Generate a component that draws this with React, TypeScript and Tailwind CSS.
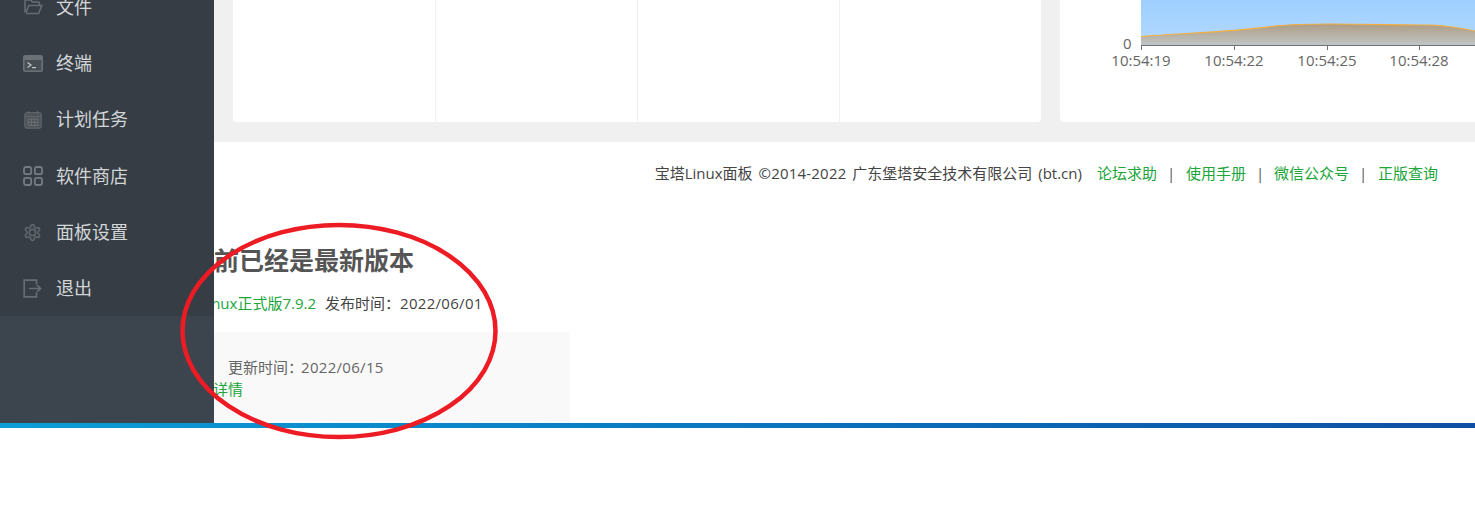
const menu = [
  { label: "文件", icon: <FolderIcon /> },
  { label: "终端", icon: <TerminalIcon /> },
  { label: "计划任务", icon: <CalendarIcon /> },
  { label: "软件商店", icon: <GridIcon /> },
  { label: "面板设置", icon: <GearIcon /> },
  { label: "退出", icon: <ExitIcon /> },
];

const font = "font-['Open_Sans','Noto_Sans_CJK_SC',sans-serif]";

function FolderIcon() {
  return (
    <svg width="20" height="20" viewBox="0 0 20 20" fill="none" stroke="#666c72" strokeWidth="1.6">
      <path d="M3 16.5 H15.5 L18.8 8.5 H5.8 L3 15.5 M2 15.5 V4 C2 3.4 2.4 3 3 3 H7.5 L9.5 5 H15.5 C16 5 16.4 5.4 16.4 6 V8.5" />
    </svg>
  );
}

function TerminalIcon() {
  return (
    <svg width="20" height="17" viewBox="0 0 20 17" fill="none">
      <rect x="0.8" y="0.8" width="18.4" height="15.4" rx="1.5" fill="#474e54" stroke="#6b7177" strokeWidth="1.6" />
      <rect x="1" y="1" width="18" height="4" fill="#6b7177" />
      <path d="M4.5 7.5 L8 10 L4.5 12.5" stroke="#c4c8cb" strokeWidth="1.2" />
      <path d="M9 12.6 H13" stroke="#c4c8cb" strokeWidth="1.2" />
    </svg>
  );
}

function CalendarIcon() {
  return (
    <svg width="18" height="18" viewBox="0 0 18 18" fill="none">
      <rect x="0.8" y="1.5" width="16.4" height="15.7" rx="2.5" fill="#4d5359" stroke="#5f656b" strokeWidth="1.2" />
      <path d="M4.5 0.2 V2.5 M13.5 0.2 V2.5" stroke="#666c72" strokeWidth="1.2" />
      <path d="M1 5.5 H17" stroke="#60666c" strokeWidth="1" />
      <path d="M4 8 H14 V14.5 H4 Z M4 11.2 H14 M7.3 8 V14.5 M10.7 8 V14.5" stroke="#71777c" strokeWidth="0.8" />
    </svg>
  );
}

function GridIcon() {
  return (
    <svg width="20" height="20" viewBox="0 0 20 20" fill="none" stroke="#757b80" strokeWidth="1.8">
      <rect x="1" y="1" width="7.2" height="7.2" rx="2" />
      <rect x="11.8" y="1" width="7.2" height="7.2" rx="2" />
      <rect x="1" y="11.8" width="7.2" height="7.2" rx="2" />
      <rect x="11.8" y="11.8" width="7.2" height="7.2" rx="2" />
    </svg>
  );
}

function GearIcon() {
  return (
    <svg width="19" height="19" viewBox="0 0 24 24" fill="none" stroke="#62686e" strokeWidth="2">
      <path d="M12.22 2h-.44a2 2 0 0 0-2 2v.18a2 2 0 0 1-1 1.73l-.43.25a2 2 0 0 1-2 0l-.15-.08a2 2 0 0 0-2.73.73l-.22.38a2 2 0 0 0 .73 2.73l.15.1a2 2 0 0 1 1 1.72v.51a2 2 0 0 1-1 1.74l-.15.09a2 2 0 0 0-.73 2.73l.22.38a2 2 0 0 0 2.73.73l.15-.08a2 2 0 0 1 2 0l.43.25a2 2 0 0 1 1 1.73V20a2 2 0 0 0 2 2h.44a2 2 0 0 0 2-2v-.18a2 2 0 0 1 1-1.73l.43-.25a2 2 0 0 1 2 0l.15.08a2 2 0 0 0 2.73-.73l.22-.39a2 2 0 0 0-.73-2.73l-.15-.08a2 2 0 0 1-1-1.74v-.5a2 2 0 0 1 1-1.74l.15-.09a2 2 0 0 0 .73-2.73l-.22-.38a2 2 0 0 0-2.73-.73l-.15.08a2 2 0 0 1-2 0l-.43-.25a2 2 0 0 1-1-1.73V4a2 2 0 0 0-2-2z" />
      <circle cx="12" cy="12" r="4" />
    </svg>
  );
}

function ExitIcon() {
  return (
    <svg width="19" height="19" viewBox="0 0 19 19" fill="none" stroke="#666c72" strokeWidth="1.7">
      <path d="M13.5 5.5 V1.2 H1.2 V17.8 H13.5 V13.5" />
      <path d="M6 9.5 H17.5 M14 6 L17.5 9.5 L14 13" />
    </svg>
  );
}

function Chart() {
  const ticks = [
    { x: 81, label: "10:54:19" },
    { x: 174, label: "10:54:22" },
    { x: 267, label: "10:54:25" },
    { x: 359, label: "10:54:28" },
  ];
  return (
    <svg width="415" height="72" viewBox="0 0 415 72" className="block">
      <defs>
        <linearGradient id="sky" x1="0" y1="0" x2="0" y2="1">
          <stop offset="0" stopColor="#9dcfff" />
          <stop offset="1" stopColor="#b4d9ff" />
        </linearGradient>
        <linearGradient id="load" x1="0" y1="0" x2="0" y2="1">
          <stop offset="0" stopColor="#ae9d85" />
          <stop offset="1" stopColor="#bfc5c4" />
        </linearGradient>
      </defs>
      <rect x="81" y="0" width="334" height="45" fill="url(#sky)" />
      <path d="M81 36.5 C125 33 175 32 215 26 C235 24 250 24 270 24 C310 24 340 25 370 25 C385 25.5 400 28 415 31 V45 H81 Z" fill="url(#load)" />
      <path d="M81 36.5 C125 33 175 32 215 26 C235 24 250 24 270 24 C310 24 340 25 370 25 C385 25.5 400 28 415 31" fill="none" stroke="#f5ae3d" strokeWidth="1.2" />
      <path d="M81 45.5 H415" stroke="#6e7079" strokeWidth="1" />
      {ticks.map((t) => (
        <path key={t.x} d={`M${t.x + 0.5} 45 V50`} stroke="#6e7079" strokeWidth="1" />
      ))}
      <text x="71.5" y="49" textAnchor="end" fontSize="15" fill="#666" fontFamily="Open Sans, sans-serif">0</text>
      {ticks.map((t) => (
        <text key={t.label} x={t.x} y="66" textAnchor="middle" fontSize="15" fill="#666" fontFamily="Open Sans, sans-serif">{t.label}</text>
      ))}
    </svg>
  );
}

function Sep({ width }: { width: string }) {
  return <span className={`${width} pl-[10px] text-[#555]`}>|</span>;
}

export default function App() {
  return (
    <div className={`relative w-[1475px] h-[513px] overflow-hidden bg-white ${font}`}>
      <div className="flex h-[423px]">
        <div className="w-[214px] shrink-0 bg-[#3c444d] overflow-hidden">
          <div className="bg-[#363d44] mt-[-21px] h-[337px]">
            {menu.map((m) => (
              <div key={m.label} className="h-[56.3px] flex items-center text-[18px] text-[#d2d6d8]">
                <div className="w-[56px] flex justify-center pl-[11px] pr-[2px]">{m.icon}</div>
                <span>{m.label}</span>
              </div>
            ))}
          </div>
        </div>

        <div className="flex-1 min-w-0 overflow-hidden">
          <div className="bg-[#f0f0f0] h-[142px] pl-[19px] flex gap-[19px]">
            <div className="w-[808px] h-[122px] bg-white rounded-b-[4px] flex shrink-0">
              <div className="w-[203px] border-r border-[#f0f0f0]" />
              <div className="w-[202px] border-r border-[#f0f0f0]" />
              <div className="w-[202px] border-r border-[#f0f0f0]" />
              <div className="w-[201px]" />
            </div>
            <div className="flex-1 h-[122px] bg-white rounded-bl-[4px] overflow-hidden">
              <Chart />
            </div>
          </div>

          <div className="h-[63px] pt-[20px] pr-[37px] flex justify-end text-[15px] leading-[22px] text-[#444]">
            <span className="mr-[15px] [word-spacing:2px]">
              宝塔Linux面板 <span className="tracking-[0.2px]">©2014-2022</span> 广东堡塔安全技术有限公司 (bt.cn)
            </span>
            <a className="text-[#20a53a]">论坛求助</a>
            <Sep width="w-[29px]" />
            <a className="text-[#20a53a]">使用手册</a>
            <Sep width="w-[28px]" />
            <a className="text-[#20a53a]">微信公众号</a>
            <Sep width="w-[29px]" />
            <a className="text-[#20a53a]">正版查询</a>
          </div>

          <div className="ml-[-25px] mt-[38px] text-[25px] leading-[34px] font-bold text-[#555] whitespace-nowrap">
            当前已经是最新版本
          </div>
          <div className="mt-[15px] h-[22px] text-[15px] leading-[22px] whitespace-nowrap flex">
            <div className="ml-[-40px] w-[142px] flex justify-end">
              <span className="text-[#20a53a]">宝塔Linux正式版7.9.2</span>
            </div>
            <span className="ml-[9px] text-[#444]">
              发布时间：<span className="tracking-[0.3px]">2022/06/01</span>
            </span>
          </div>
          <div className="ml-[-31px] mt-[18px] w-[387px] h-[91px] bg-[#f9f9f9] rounded-t-[4px] pt-[24px] text-[15px] leading-[22px] whitespace-nowrap">
            <div className="pl-[45px] text-[#666]">
              更新时间：<span className="ml-[-2px] tracking-[0.3px]">2022/06/15</span>
            </div>
            <div className="text-[#20a53a]">查看详情</div>
          </div>
        </div>
      </div>

      <div className="h-[5px] bg-gradient-to-r from-[#0c9fd8] to-[#0f4ea3]" />

      <svg width="1475" height="513" viewBox="0 0 1475 513" className="absolute inset-0 pointer-events-none" fill="none">
        <ellipse cx="339" cy="331" rx="156.5" ry="106" stroke="#ed1c24" strokeWidth="4.5" />
      </svg>
    </div>
  );
}
